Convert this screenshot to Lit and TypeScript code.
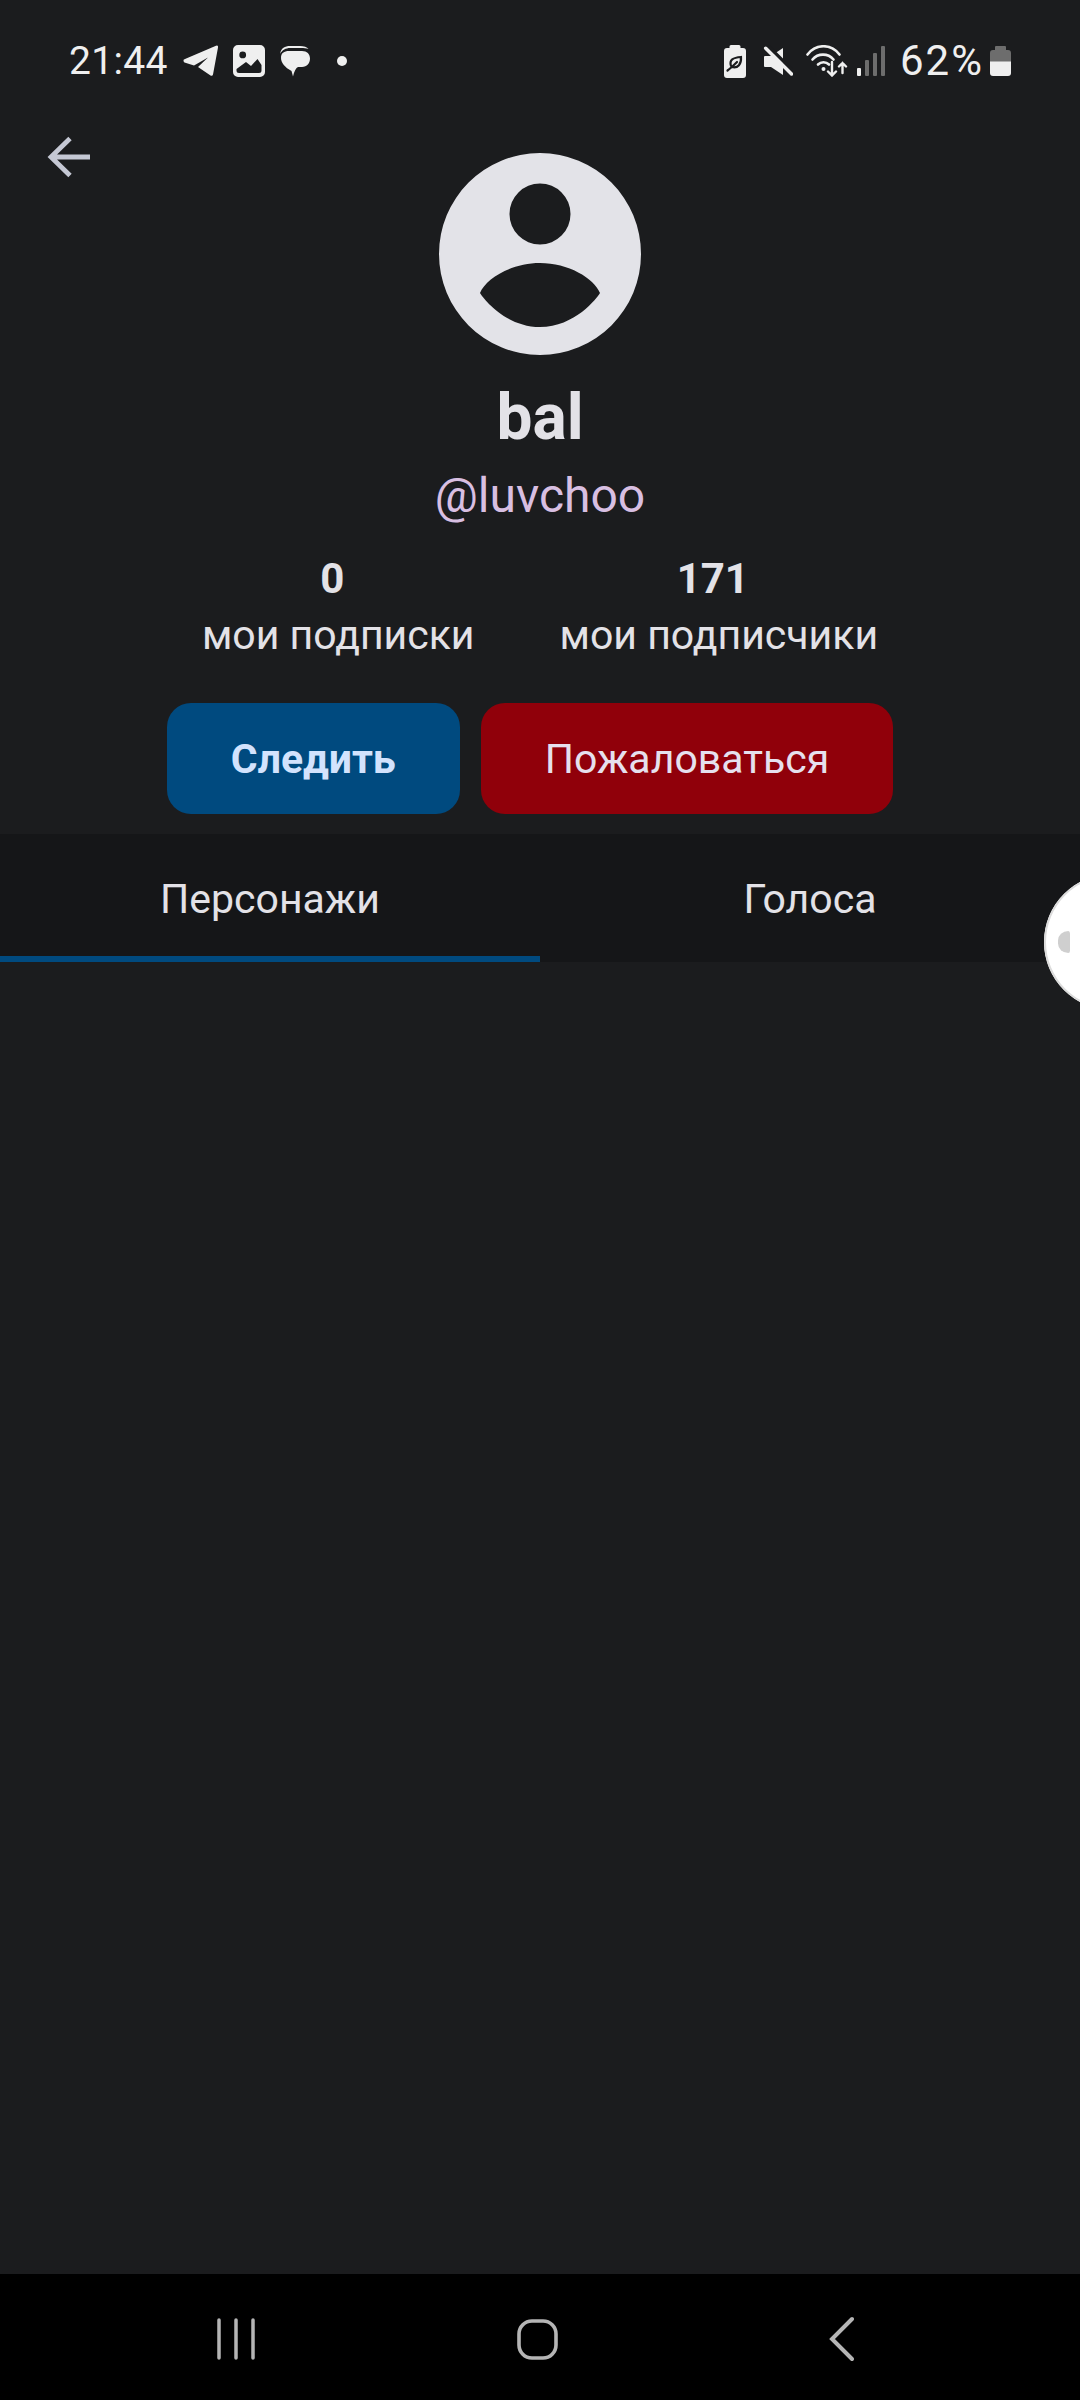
import { LitElement, html, css } from "lit";
import { customElement } from "lit/decorators.js";

@customElement("app-root")
export class AppRoot extends LitElement {
  static styles = css`
    :host { display: block; width: 1080px; height: 2400px; font-family: Roboto, "Noto Sans", sans-serif; }
    .page { position: relative; width: 1080px; height: 2400px; display: flex; flex-direction: column; background: #1b1c1e; overflow: hidden; color: #e3e2e7; }
    .status { height: 122px; flex: none; display: flex; align-items: center; padding: 0 69px; box-sizing: border-box; color: #efefef; }
    .status svg { display: block; flex: none; fill: #efefef; }
    .time { font-size: 39px; letter-spacing: 0.3px; line-height: 44px; margin-right: 14px; font-weight: 400; }
    .pct { font-size: 42px; line-height: 44px; margin: 0 6px 0 15px; letter-spacing: 2px; }
    .grow { flex: 1; }
    .m14 { margin-left: 14px; }
    .m26 { margin-left: 26px; }
    .m17 { margin-left: 17px; }
    .m13 { margin-left: 13px; }
    .m9 { margin-left: 9px; }
    .header { position: relative; display: flex; flex-direction: column; align-items: center; padding: 31px 0 20px; }
    .back { position: absolute; left: 46px; top: 12px; }
    .avatar { display: block; }
    .name { font-size: 64px; line-height: 72px; font-weight: 700; margin-top: 27px; }
    .handle { font-size: 48px; line-height: 56px; margin-top: 14px; color: #d8bfe2; }
    .stats { display: flex; gap: 85px; margin-top: 31px; }
    .stat { display: flex; flex-direction: column; align-items: center; }
    .num { font-size: 42px; line-height: 48px; font-weight: 700; padding-right: 12px; }
    .lbl { font-size: 41px; line-height: 48px; margin-top: 8px; }
    .actions { display: flex; gap: 21px; margin-top: 44px; padding-right: 20px; }
    .btn { height: 111px; border-radius: 24px; display: flex; align-items: center; justify-content: center; padding: 0 64px; font-size: 41px; }
    .follow { background: #004a7f; color: #d3e3fd; font-weight: 700; }
    .report { background: #90000a; color: #e6e0ee; }
    .tabs { display: flex; height: 128px; flex: none; background: #151618; }
    .tab { flex: 1; display: flex; align-items: center; justify-content: center; font-size: 41px; box-sizing: border-box; border-bottom: 6px solid transparent; padding-top: 7px; }
    .tab.active { border-bottom-color: #004a7f; }
    .content { flex: 1; }
    .nav { height: 126px; flex: none; background: #000; display: flex; align-items: center; justify-content: space-between; padding: 4px 226px 0 216px; box-sizing: border-box; }
    .nav svg { display: block; fill: none; stroke: #b5b5b5; }
    .nav .home { margin-right: 10px; }
    .float { position: absolute; left: 1044px; top: 874px; width: 136px; height: 136px; border-radius: 50%; background: #fff; box-shadow: 0 0 0 2px #dcdcdc inset; }
    .float i { position: absolute; left: 14px; top: 57px; width: 12px; height: 22px; background: #cfcfcf; border-radius: 12px 2px 2px 12px / 11px 3px 3px 11px; }
  `;

  render() {
    return html`
      <div class="page">
        <div class="status">
          <span class="time">21:44</span>
          <svg width="37" height="32" viewBox="0 0 37 32"><path d="M1.500 15.500Q1 14.500 3 14L34 .8Q36.500 0 36 2.500L31 29.500Q30.500 31.500 28.500 30.500L16 22 26 12.500 12 20.500 2.500 17.500Q1.500 17 1.500 15.500Z"/></svg>
          <svg class="m14" width="32" height="32" viewBox="0 0 32 32"><path fill-rule="evenodd" d="M5 0h22a5 5 0 0 1 5 5v22a5 5 0 0 1-5 5H5a5 5 0 0 1-5-5V5a5 5 0 0 1 5-5Zm4.700 6.500a3.400 3.400 0 1 0 0 6.800 3.400 3.400 0 0 0 0-6.800ZM3.500 24v1.500a2.500 2.500 0 0 0 2.500 2.500h20a2.500 2.500 0 0 0 2.500-2.500V20L24.500 14 18 21 13 17Z"/></svg>
          <svg class="m14" width="32" height="32" viewBox="0 0 32 32"><path d="M14 31.500 12.500 26C6 22.500 2 17.500 2 13 2 8 5 6 10 6H23C28 6 31 9 31 13.500S28 22 23 22H19Q16 23 14 31.500Z"/><path d="M1 9C2 3 6 1 11 1H21C25 1 28 2 29.500 4 27 3 25 3 22 3H11C7 3 3 5 1 9Z"/></svg>
          <svg class="m26" width="10" height="10" viewBox="0 0 10 10"><circle cx="5" cy="5" r="5"/></svg>
          <span class="grow"></span>
          <svg width="22" height="33" viewBox="0 0 22 33"><path d="M7 0h8a1.500 1.500 0 0 1 1.500 1.500V3H19a3 3 0 0 1 3 3v24a3 3 0 0 1-3 3H3a3 3 0 0 1-3-3V6a3 3 0 0 1 3-3h2.500V1.500A1.500 1.500 0 0 1 7 0Z"/><path d="M3.500 25.500C7 23 10 20 13 17M7 21C5 15 9 12.500 17 12 17.500 19 14 23.500 8 22" fill="none" stroke="#1b1c1e" stroke-width="2.200" stroke-linecap="round"/></svg>
          <svg class="m17" width="30" height="32" viewBox="0 0 30 32"><path d="M2 11H8L20 3V30L8 22H2a1 1 0 0 1-1-1V12a1 1 0 0 1 1-1Z"/><path d="M5 1 31 27" fill="none" stroke="#1b1c1e" stroke-width="3.500"/><path d="M2.700 3.300 28.500 29" fill="none" stroke="#efefef" stroke-width="3.500" stroke-linecap="round"/></svg>
          <svg class="m13" width="42" height="32" viewBox="0 0 42 32" stroke="#efefef" stroke-linecap="round" style="fill:none"><path d="M1.500 9.500C10-1.500 25-1.500 33.500 9.500" stroke-width="2.600"/><path d="M6.500 14.500C12 8 22 8 27.500 14.500" stroke-width="2.600"/><path d="M12 19.500C15 16.500 20 16.500 23 19.500" stroke-width="2.600"/><circle cx="17.500" cy="24" r="2" fill="#efefef" stroke="none"/><path d="M26 17V30M22 26.500 26 30.500 30 26.500M36.500 28V18M33 21.500 36.500 18 40 21.500" stroke-width="2.400"/></svg>
          <svg class="m9" width="28" height="30" viewBox="0 0 28 30"><rect x="0" y="22" width="4" height="8" rx="1" fill="#efefef"/><rect x="8" y="14" width="4" height="16" rx="1" fill="#6d6d6d"/><rect x="16" y="7" width="4" height="23" rx="1" fill="#6d6d6d"/><rect x="24" y="0" width="4" height="30" rx="1" fill="#6d6d6d"/></svg>
          <span class="pct">62%</span>
          <svg width="21" height="30" viewBox="0 0 21 30"><path fill="#6d6d6d" d="M6 0h9a1 1 0 0 1 1 1v3h2a3 3 0 0 1 3 3v9H0V7a3 3 0 0 1 3-3h2V1a1 1 0 0 1 1-1Z"/><path d="M0 15.500h21V27a3 3 0 0 1-3 3H3a3 3 0 0 1-3-3Z"/></svg>
        </div>
        <div class="header">
          <svg class="back" width="46" height="46" viewBox="0 0 46 46" fill="none" stroke="#c5c8d4" stroke-width="4.800"><path d="M44 23H5M24 4.500 5 23l19 18.500"/></svg>
          <svg class="avatar" width="202" height="202" viewBox="0 0 202 202"><path fill="#e3e3e8" fill-rule="evenodd" d="M101 0a101 101 0 1 1 0 202a101 101 0 1 1 0-202ZM101 30.500a30 30 0 1 0 0 61a30 30 0 1 0 0-61ZM41 140c3 5 25 34 60 34s57-29 60-34c-6-15-32-30-60-30s-54 15-60 30Z"/></svg>
          <div class="name">bal</div>
          <div class="handle">@luvchoo</div>
          <div class="stats">
            <div class="stat"><span class="num">0</span><span class="lbl">мои подписки</span></div>
            <div class="stat"><span class="num">171</span><span class="lbl">мои подписчики</span></div>
          </div>
          <div class="actions">
            <div class="btn follow">Следить</div>
            <div class="btn report">Пожаловаться</div>
          </div>
        </div>
        <div class="tabs">
          <div class="tab active">Персонажи</div>
          <div class="tab">Голоса</div>
        </div>
        <div class="content"></div>
        <div class="nav">
          <svg width="40" height="42" viewBox="0 0 40 42" stroke-width="3.500" stroke-linecap="round"><path d="M3 2v38M20 2v38M37 2v38"/></svg>
          <svg class="home" width="41" height="41" viewBox="0 0 41 41" stroke-width="3.600"><rect x="2" y="2" width="37" height="37" rx="13"/></svg>
          <svg width="26" height="46" viewBox="0 0 26 46" stroke-width="4" stroke-linecap="round" stroke-linejoin="miter"><path d="M24 3 4 23l20 20"/></svg>
        </div>
        <div class="float"><i></i></div>
      </div>
    `;
  }
}
